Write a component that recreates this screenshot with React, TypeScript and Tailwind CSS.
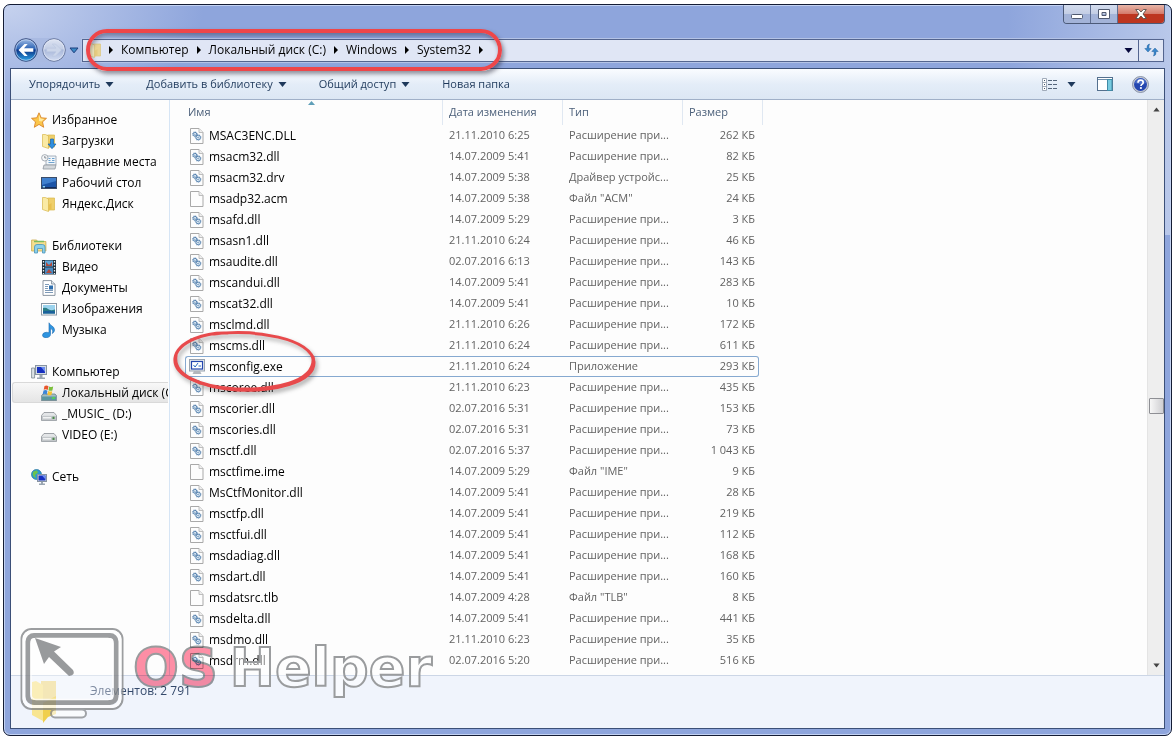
import type { ReactNode } from 'react';

type FileKind = 'dll' | 'blank' | 'exe';

interface FileRow {
  name: string;
  date: string;
  type: string;
  size: string;
  kind: FileKind;
}

const EXT = 'Расширение при...';

function row(name: string, date: string, size: string, type = EXT, kind: FileKind = 'dll'): FileRow {
  return { name, date, size, type, kind };
}

const files: FileRow[] = [
  row('MSAC3ENC.DLL', '21.11.2010 6:25', '262 КБ'),
  row('msacm32.dll', '14.07.2009 5:41', '82 КБ'),
  row('msacm32.drv', '14.07.2009 5:38', '25 КБ', 'Драйвер устройс...'),
  row('msadp32.acm', '14.07.2009 5:38', '24 КБ', 'Файл "ACM"', 'blank'),
  row('msafd.dll', '14.07.2009 5:29', '3 КБ'),
  row('msasn1.dll', '21.11.2010 6:24', '46 КБ'),
  row('msaudite.dll', '02.07.2016 6:13', '143 КБ'),
  row('mscandui.dll', '14.07.2009 5:41', '283 КБ'),
  row('mscat32.dll', '14.07.2009 5:41', '10 КБ'),
  row('msclmd.dll', '21.11.2010 6:26', '172 КБ'),
  row('mscms.dll', '21.11.2010 6:24', '611 КБ'),
  row('msconfig.exe', '21.11.2010 6:24', '293 КБ', 'Приложение', 'exe'),
  row('mscoree.dll', '21.11.2010 6:23', '435 КБ'),
  row('mscorier.dll', '02.07.2016 5:31', '153 КБ'),
  row('mscories.dll', '02.07.2016 5:31', '73 КБ'),
  row('msctf.dll', '02.07.2016 5:37', '1 043 КБ'),
  row('msctfime.ime', '14.07.2009 5:29', '9 КБ', 'Файл "IME"', 'blank'),
  row('MsCtfMonitor.dll', '14.07.2009 5:41', '28 КБ'),
  row('msctfp.dll', '14.07.2009 5:41', '219 КБ'),
  row('msctfui.dll', '14.07.2009 5:41', '112 КБ'),
  row('msdadiag.dll', '14.07.2009 5:41', '168 КБ'),
  row('msdart.dll', '14.07.2009 5:41', '160 КБ'),
  row('msdatsrc.tlb', '14.07.2009 4:28', '8 КБ', 'Файл "TLB"', 'blank'),
  row('msdelta.dll', '14.07.2009 5:41', '441 КБ'),
  row('msdmo.dll', '21.11.2010 6:23', '35 КБ'),
  row('msdrm.dll', '02.07.2016 5:20', '516 КБ'),
];

function Svg({ children }: { children: ReactNode }) {
  return (
    <svg width="16" height="16" viewBox="0 0 16 16" className="shrink-0" aria-hidden="true">
      {children}
    </svg>
  );
}

function StarIcon() {
  return (
    <Svg>
      <path d="M8 .8l2.200 5 5.300.500-4 3.600 1.200 5.400L8 12.400l-4.700 2.900 1.200-5.400-4-3.600 5.300-.500z" fill="#fbc64a" stroke="#d9862a" strokeWidth=".9" />
      <path d="M8 2.800l1.500 3.800 3.800.400-2.900 2.500L8 9z" fill="#ffe9a0" />
    </Svg>
  );
}

function FolderShape() {
  return (
    <>
      <path d="M6.500 2h7v12h-7z" fill="#efcf6b" stroke="#d9b84c" strokeWidth=".7" />
      <path d="M1.500 1.500h3l3 1.500v12.500l-6-2z" fill="#faeaa4" stroke="#d9b84c" strokeWidth=".7" />
      <path d="M7.500 9l3-2v6l-3 2z" fill="#e8c050" />
    </>
  );
}

function FolderIcon() {
  return (
    <Svg>
      <FolderShape />
    </Svg>
  );
}

function DownloadsIcon() {
  return (
    <Svg>
      <FolderShape />
      <path d="M9.500 6h3v5H15l-4 4.700L7 11h2.500z" fill="#2f8fe0" stroke="#1763ac" strokeWidth=".7" />
    </Svg>
  );
}

function RecentIcon() {
  return (
    <Svg>
      <path d="M5 2h10v9H5z" fill="#f1f6fa" stroke="#93a0ad" strokeWidth=".8" />
      <path d="M7.500 4.500h2M11 4.500h2.500M7.500 6.500h2M11 6.500h2.500M7.500 8.500h6" stroke="#6fa3cf" />
      <path d="M3 11h12l-1 4H2z" fill="#d3d7db" stroke="#8f979f" strokeWidth=".8" />
      <circle cx="3.800" cy="3.800" r="3.200" fill="#f5f7f9" stroke="#949da6" strokeWidth=".8" />
      <path d="M3.800 2v2h1.600" fill="none" stroke="#56606b" strokeWidth=".7" />
    </Svg>
  );
}

function DesktopIcon() {
  return (
    <Svg>
      <rect x=".500" y="2.500" width="15" height="11" fill="#1c55a8" stroke="#3a4c68" />
      <path d="M1 3h14v3L1 10z" fill="#3f80cf" />
      <path d="M1 12.500h14" stroke="#132c5c" />
      <path d="M1.500 12.500h2.500v-1.500h-2z" fill="#8fd4f0" />
    </Svg>
  );
}

function LibrariesIcon() {
  return (
    <Svg>
      <path d="M.600 2h5l1 1.500h8.300V13H.600z" fill="#f6df8e" stroke="#c9a94b" strokeWidth=".8" />
      <path d="M3 3.500h10" stroke="#7cbb5e" strokeWidth="1.500" />
      <path d="M3.500 15V9q0-2.500 2.500-2.500h5.500Q14 6.500 14 9v6h-2.500v-4.500h-5V15z" fill="#8cd0ea" stroke="#4a94bb" strokeWidth=".8" />
    </Svg>
  );
}

function VideoIcon() {
  return (
    <Svg>
      <rect x="1" y="1" width="14" height="14.500" fill="#22303c" />
      <rect x="4" y="1.500" width="8" height="6" fill="#5fa6d8" />
      <rect x="4" y="8.500" width="8" height="6.500" fill="#4a8ac0" />
      <path d="M5 3l3 3 3-3v4H5zM5 14l3-4 3 4z" fill="#b04a3c" />
      <path d="M2.500 2v13M13.500 2v13" stroke="#e8eef2" strokeWidth="1.300" strokeDasharray="1.500 1.500" />
    </Svg>
  );
}

function DocumentsIcon() {
  return (
    <Svg>
      <path d="M2 .600h8.500L14 4v11.400H2z" fill="#fff" stroke="#7f8b98" strokeWidth=".9" />
      <path d="M10.500.600V4H14" fill="#dfe6ec" stroke="#7f8b98" strokeWidth=".8" />
      <path d="M4 4.500h4M4 6.500h3M4 8.500h3M4 10.500h8M4 12.500h8" stroke="#6f8fb0" strokeWidth=".9" />
      <rect x="8" y="5.500" width="4" height="4" fill="#2f6fae" />
    </Svg>
  );
}

function PicturesIcon() {
  return (
    <Svg>
      <rect x=".500" y="2.500" width="15" height="11.500" fill="#fff" stroke="#8b98a5" />
      <rect x="2" y="4" width="12" height="8.500" fill="#9bd3ee" />
      <path d="M2 7q3-1 5 1t7 .500v4H2z" fill="#2b7e86" />
      <path d="M2 10.500q6-1.500 12 0v2H2z" fill="#1a5f9c" />
    </Svg>
  );
}

function MusicIcon() {
  return (
    <Svg>
      <path d="M8 .800c.500 2.800 5.500 3.200 5.500 7 0 1.800-1 3-2.200 3.700 1-2.700.200-4.300-1.800-5.200v6q0 3-4.300 3.400-3.700 0-3.700-2.400 0-2.700 3.800-3 1.500 0 2.700.500z" fill="#2e95e0" stroke="#1a68b0" strokeWidth=".6" />
    </Svg>
  );
}

function ComputerIcon() {
  return (
    <Svg>
      <path d="M.600 4h3v10h-3z" fill="#dde3e6" stroke="#7a868f" strokeWidth=".8" />
      <rect x="4.500" y="1.500" width="11" height="9" fill="#d3dbe4" stroke="#8794a2" />
      <rect x="6" y="3" width="8" height="6" fill="#1730c0" />
      <path d="M10 3h4v5z" fill="#6c8df0" />
      <path d="M8.500 11h3v2.500H14V15H6v-1.500h2.500z" fill="#9aa6b2" />
    </Svg>
  );
}

function DriveIcon() {
  return (
    <Svg>
      <path d="M3 6.500h10l2.500 3v5H.500v-5z" fill="#e4e6e8" stroke="#8a8f94" strokeWidth=".8" />
      <path d="M1 9.800h14v4.400H1z" fill="#c3c7ca" />
      <rect x="2" y="11" width="8" height="1.500" fill="#f2f3f4" />
      <rect x="11.500" y="10.700" width="2" height="2.300" fill="#4d8a4c" />
    </Svg>
  );
}

function SystemDriveIcon() {
  return (
    <Svg>
      <path d="M2 9h12l1.700 2v4.500H.300V11z" fill="#a4bdc2" stroke="#66808a" strokeWidth=".8" />
      <path d="M1 11.500h14V15H1z" fill="#5b97a0" />
      <rect x="11" y="12" width="3" height="2" fill="#54cd5c" />
      <path d="M3.500 1Q5.500 0 7.500 1.200L6.700 5Q4.700 3.800 2.700 4.800z" fill="#e8562c" />
      <path d="M8.200 1.400q2 1 4 .200l-.800 3.800q-2 .800-4-.200z" fill="#7cbf3c" />
      <path d="M2.500 5.500q2-1 4 .200l-.800 3.800q-2-1.200-4-.200z" fill="#3a86d8" />
      <path d="M7.200 6q2 1 4 .200l-.800 3.800q-2 .800-4-.200z" fill="#f8c12c" />
    </Svg>
  );
}

function NetworkIcon() {
  return (
    <Svg>
      <circle cx="5.500" cy="5.500" r="5" fill="#2a9ad0" stroke="#26749c" strokeWidth=".7" />
      <path d="M2 3q2-2 4-1.500l1 2-3 2.500 1 3-2-1Q1 6 2 3z" fill="#6cc34c" />
      <rect x="6.500" y="5.500" width="9" height="7" fill="#d3dbe4" stroke="#8794a2" />
      <rect x="7.500" y="6.500" width="7" height="5" fill="#1730c0" />
      <path d="M11 6.500h3.500v4z" fill="#6c8df0" />
      <path d="M10 13h2v1.500h2V16H8v-1.500h2z" fill="#9aa6b2" />
    </Svg>
  );
}

function FileIcon({ kind }: { kind: FileKind }) {
  if (kind === 'exe') {
    return (
      <Svg>
        <rect x=".500" y=".500" width="15" height="11.500" fill="#e4e8ee" stroke="#9aa4b0" />
        <rect x="2.500" y="2.500" width="11" height="7.500" fill="#fff" stroke="#2446ae" strokeWidth="1.200" />
        <path d="M4.500 6l1.600 2L9 4" fill="none" stroke="#2a6ac0" />
        <path d="M9.500 7h2.500" stroke="#2a6ac0" />
        <path d="M5 12h6l1.500 3h-9z" fill="#b2b6bc" />
      </Svg>
    );
  }
  return (
    <Svg>
      <path d="M1.500.500H10L14 4.500v11H1.500z" fill="#fdfdfd" stroke="#a9a9a9" />
      <path d="M10 .500v4h4" fill="#eee" stroke="#b0b0b0" strokeWidth=".8" />
      {kind === 'dll' ? (
        <g fill="#e3eef7" stroke="#4a78a8" strokeWidth=".9">
          <circle cx="5.900" cy="6.200" r="1.900" />
          <circle cx="9.200" cy="9.500" r="2.300" />
          <circle cx="5.900" cy="6.200" r="2.500" fill="none" strokeWidth=".600" strokeDasharray=".800 1.200" />
          <circle cx="9.200" cy="9.500" r="2.900" fill="none" strokeWidth=".600" strokeDasharray=".800 1.200" />
          <circle cx="5.900" cy="6.200" r=".400" strokeWidth=".500" />
          <circle cx="9.200" cy="9.500" r=".600" strokeWidth=".600" />
        </g>
      ) : null}
    </Svg>
  );
}

interface NavItem {
  label: string;
  icon: ReactNode;
  selected?: boolean;
}

const groups: { title: NavItem; items: NavItem[] }[] = [
  {
    title: { label: 'Избранное', icon: <StarIcon /> },
    items: [
      { label: 'Загрузки', icon: <DownloadsIcon /> },
      { label: 'Недавние места', icon: <RecentIcon /> },
      { label: 'Рабочий стол', icon: <DesktopIcon /> },
      { label: 'Яндекс.Диск', icon: <FolderIcon /> },
    ],
  },
  {
    title: { label: 'Библиотеки', icon: <LibrariesIcon /> },
    items: [
      { label: 'Видео', icon: <VideoIcon /> },
      { label: 'Документы', icon: <DocumentsIcon /> },
      { label: 'Изображения', icon: <PicturesIcon /> },
      { label: 'Музыка', icon: <MusicIcon /> },
    ],
  },
  {
    title: { label: 'Компьютер', icon: <ComputerIcon /> },
    items: [
      { label: 'Локальный диск (C:)', icon: <SystemDriveIcon />, selected: true },
      { label: '_MUSIC_ (D:)', icon: <DriveIcon /> },
      { label: 'VIDEO (E:)', icon: <DriveIcon /> },
    ],
  },
  { title: { label: 'Сеть', icon: <NetworkIcon /> }, items: [] },
];

function ArrowDown({ className = '' }: { className?: string }) {
  return (
    <svg width="9" height="5" viewBox="0 0 9 5" className={`shrink-0 ${className}`} aria-hidden="true">
      <path d="M.500 0h8l-4 5z" fill="currentColor" />
    </svg>
  );
}

function ArrowRight() {
  return (
    <svg width="4" height="8" viewBox="0 0 4 8" className="shrink-0" aria-hidden="true">
      <path d="M0 0l4 4-4 4z" fill="#000" />
    </svg>
  );
}

function CaptionButtons() {
  return (
    <div className="flex h-[19px] overflow-hidden rounded-b-[4px] border border-t-0 border-[#4c5a78]">
      <button type="button" aria-label="Свернуть" className="flex w-[27px] items-center justify-center border-r border-[#5f6f92] bg-linear-to-b from-[#d3dcee] via-[#c3cde4] via-50% to-[#a3b3d8] to-50%">
        <svg width="12" height="5" viewBox="0 0 12 5" className="mt-1">
          <rect x=".500" y=".500" width="11" height="4" rx="1" fill="#fff" stroke="#505a70" />
        </svg>
      </button>
      <button type="button" aria-label="Развернуть" className="flex w-[27px] items-center justify-center border-r border-[#5f6f92] bg-linear-to-b from-[#d3dcee] via-[#c3cde4] via-50% to-[#a3b3d8] to-50%">
        <svg width="12" height="10" viewBox="0 0 12 10">
          <path d="M.500.500h11v9H.500zM4 3.500h4v3H4z" fill="#fff" fillRule="evenodd" stroke="#505a70" />
        </svg>
      </button>
      <button type="button" aria-label="Закрыть" className="flex w-[46px] items-center justify-center bg-linear-to-b from-[#e6b5a8] via-[#d4796a] via-50% to-[#bd3520] to-50%">
        <svg width="12" height="10" viewBox="0 0 12 10">
          <path d="M.700.500h3L6 3 8.300.500h3L8 5l3.300 4.500h-3L6 7 3.700 9.500h-3L4 5z" fill="#fff" stroke="#55504f" strokeWidth=".9" />
        </svg>
      </button>
    </div>
  );
}

function HistoryButtons() {
  return (
    <div className="flex w-[68px] items-center">
      <div className="flex gap-1 rounded-full bg-[#a9bae2]">
        <button type="button" aria-label="Назад">
          <svg width="24" height="24" viewBox="0 0 24 24" className="block">
            <defs>
              <linearGradient id="back" x1="0" y1="0" x2="0" y2="1">
                <stop offset="0" stopColor="#a5bfe6" />
                <stop offset=".45" stopColor="#2a62b4" />
                <stop offset=".5" stopColor="#0c3486" />
                <stop offset="1" stopColor="#2fa8ea" />
              </linearGradient>
            </defs>
            <circle cx="12" cy="12" r="11.300" fill="url(#back)" stroke="#3c4f80" />
            <circle cx="12" cy="12" r="10.300" fill="none" stroke="#c3d6f2" strokeWidth=".7" />
            <path d="M4.500 12l6-6h3.200L10 10.200h9.300v3.600H10l3.700 4.200h-3.200z" fill="#fff" />
          </svg>
        </button>
        <button type="button" aria-label="Вперёд">
          <svg width="24" height="24" viewBox="0 0 24 24" className="block">
            <defs>
              <linearGradient id="fwd" x1="0" y1="0" x2="0" y2="1">
                <stop offset="0" stopColor="#dfe5f3" />
                <stop offset=".45" stopColor="#c3cee6" />
                <stop offset=".5" stopColor="#a9b8da" />
                <stop offset="1" stopColor="#d3ddf2" />
              </linearGradient>
            </defs>
            <circle cx="12" cy="12" r="11.300" fill="url(#fwd)" stroke="#66759c" />
            <circle cx="12" cy="12" r="10.300" fill="none" stroke="#e4eaf6" strokeWidth=".7" />
            <path d="M19.500 12l-6-6h-3.200l3.700 4.200H4.700v3.600H14l-3.700 4.200h3.200z" fill="#ccd6ea" stroke="#b8c4de" strokeWidth=".5" />
          </svg>
        </button>
      </div>
      <button type="button" aria-label="Последние страницы" className="ml-[3px]">
        <svg width="10" height="7" viewBox="0 0 10 7" className="block">
          <path d="M1 1h8L5 5.800z" fill="#3b8ac6" stroke="#1d3e7c" />
        </svg>
      </button>
    </div>
  );
}

function AddressBar() {
  const crumbs = ['Компьютер', 'Локальный диск (C:)', 'Windows', 'System32'];
  return (
    <div className="flex h-[23px] grow border border-[#54658f] bg-[#e0e6f5] text-[12px] text-black shadow-[0_0_0_1px_#b4c3e6]">
      <nav aria-label="Адрес" className="relative flex grow items-center gap-2 pl-[26px]">
        <span className="absolute top-[2px] left-[4px] opacity-70">
          <FolderIcon />
        </span>
        <ArrowRight />
        {crumbs.map((crumb) => (
          <span key={crumb} className="flex items-center gap-2 whitespace-nowrap">
            <a href="#">{crumb}</a>
            <ArrowRight />
          </span>
        ))}
        {/* red marker around the path */}
        <div className="pointer-events-none absolute top-[-11px] left-[3px] h-[42px] w-[416px] rounded-full border-4 border-[#ee4649] shadow-[2px_3px_4px_rgba(40,40,60,0.5),inset_1px_3px_4px_rgba(40,40,60,0.4)]" />
      </nav>
      <button type="button" aria-label="Предыдущие расположения" className="px-[5px]">
        <ArrowDown className="text-[#06083c]" />
      </button>
      <button type="button" aria-label="Обновить" className="flex w-[25px] items-center justify-center border-l border-[#54658f]">
        <svg width="15" height="14" viewBox="0 0 15 14">
          <path d="M5.500 1Q2.500 1.500 3 5.500H.800L4 9l3.200-3.500H5Q4.500 3 5.500 1z" fill="#3a87cc" stroke="#24639f" strokeWidth=".5" />
          <path d="M9.500 13q3-.500 2.500-4.500h2.200L11 5 7.800 8.500H10q.500 2.500-.500 4.500z" fill="#3a87cc" stroke="#24639f" strokeWidth=".5" />
        </svg>
      </button>
    </div>
  );
}

function Toolbar() {
  const actions = [
    { label: 'Упорядочить', menu: true },
    { label: 'Добавить в библиотеку', menu: true },
    { label: 'Общий доступ', menu: true },
    { label: 'Новая папка', menu: false },
  ];
  return (
    <div className="flex h-[31px] items-center border-b border-[#a0b0c8] bg-linear-to-b from-[#fafcff] via-[#e4edf8] via-50% to-[#dce7f4] pr-[15px] pl-[18px] text-[11px] text-[#1e395b]">
      <div className="flex grow gap-8">
        {actions.map((action) => (
          <button key={action.label} type="button" className="flex items-center gap-[5px] whitespace-nowrap">
            {action.label}
            {action.menu ? <ArrowDown /> : null}
          </button>
        ))}
      </div>
      <button type="button" aria-label="Изменить представление">
        <svg width="15" height="13" viewBox="0 0 15 13" className="block">
          <path d="M.500.500h4v12h-4zM.500 4.500h4M.500 8.500h4" fill="#fff" stroke="#8b98a8" strokeWidth=".8" />
          <path d="M2 2.500h1M2 6.500h1M2 10.500h1" stroke="#41556e" />
          <path d="M6 2.500h4M11 2.500h4M6 6.500h4M11 6.500h4M6 10.500h4M11 10.500h4" stroke="#54657a" />
        </svg>
      </button>
      <button type="button" aria-label="Другие параметры" className="ml-[10px]">
        <ArrowDown />
      </button>
      <button type="button" aria-label="Область просмотра" className="ml-[21px]">
        <svg width="16" height="14" viewBox="0 0 16 14" className="block">
          <rect x=".500" y=".500" width="15" height="13" fill="#fff" stroke="#54708e" />
          <path d="M1 2.500h14" stroke="#6e8caa" />
          <rect x="10.500" y="2.500" width="4.500" height="11" fill="#78cbe0" stroke="#418ba6" />
        </svg>
      </button>
      <button type="button" aria-label="Справка" className="ml-[19px]">
        <svg width="17" height="17" viewBox="0 0 17 17" className="block">
          <circle cx="8.500" cy="8.500" r="8" fill="#c7ccd6" stroke="#76829a" strokeWidth=".8" />
          <circle cx="8.500" cy="8.500" r="6.500" fill="#2547b0" />
          <path d="M3 7a5.600 5.600 0 0111 0q-5 2-11 0z" fill="#6485d8" opacity=".6" />
          <path d="M6 6.800q0-2.600 2.600-2.600t2.600 2.200q0 1.200-1.300 2-.9.600-.9 1.500" fill="none" stroke="#fff" strokeWidth="1.700" />
          <circle cx="8.900" cy="12" r="1.100" fill="#fff" />
        </svg>
      </button>
    </div>
  );
}

function Sidebar() {
  return (
    <aside className="w-[159px] shrink-0 overflow-hidden border-r border-[#d6e5f5] pt-[9px] text-[12px] text-black">
      <nav aria-label="Область переходов" className="flex flex-col gap-[21px]">
        {groups.map(({ title, items }) => (
          <div key={title.label}>
            <a href="#" className="flex h-[21px] items-center gap-[5px] pl-5 whitespace-nowrap">
              {title.icon}
              {title.label}
            </a>
            {items.map((item) => (
              <a
                key={item.label}
                href="#"
                className={
                  item.selected
                    ? 'mx-px flex h-[21px] items-center gap-[5px] overflow-hidden rounded-l-[3px] border border-r-0 border-[#d9d9d9] bg-linear-to-b from-[#f8f8f8] to-[#e5e5e5] pl-[28px] whitespace-nowrap'
                    : 'flex h-[21px] items-center gap-[5px] pl-[30px] whitespace-nowrap'
                }
              >
                {item.icon}
                {item.label}
              </a>
            ))}
          </div>
        ))}
      </nav>
    </aside>
  );
}

const headCell = 'h-[25px] border-r border-[#e0e8f2] p-0 pl-[6px] text-left font-normal';

function FileTable() {
  return (
    <table className="w-[578px] table-fixed border-separate border-spacing-0 text-[11px] text-[#626262]">
      <colgroup>
        <col className="w-[258px]" />
        <col className="w-[120px]" />
        <col className="w-[120px]" />
        <col className="w-[76px]" />
        <col className="w-[4px]" />
      </colgroup>
      <thead className="text-[#4c607a]">
        <tr>
          <th className="relative h-[25px] border-r border-[#e0e8f2] p-0 pl-[3px] text-left font-normal">
            Имя
            <svg width="7" height="4" viewBox="0 0 7 4" className="absolute top-px left-[123px]" aria-hidden="true">
              <path d="M0 4l3.500-4L7 4z" fill="#5f9fb8" />
            </svg>
          </th>
          <th className={headCell}>Дата изменения</th>
          <th className={headCell}>Тип</th>
          <th colSpan={2} className={headCell}>
            Размер
          </th>
        </tr>
      </thead>
      <tbody>
        {files.map((file) => {
          const edge = file.kind === 'exe' ? 'border-[#86a9d0]' : 'border-transparent';
          return (
            <tr key={file.name}>
              <td className={`h-[21px] rounded-l-[3px] border border-r-0 p-0 pl-[3px] text-[12px] text-black ${edge}`}>
                <span className="flex h-[19px] items-center gap-[4px]">
                  <FileIcon kind={file.kind} />
                  {file.name}
                </span>
              </td>
              <td className={`border-y p-0 pl-[6px] ${edge}`}>{file.date}</td>
              <td className={`border-y p-0 pl-[6px] whitespace-nowrap ${edge}`}>{file.type}</td>
              <td className={`rounded-r-[3px] border border-l-0 p-0 pr-[3px] text-right ${edge}`}>{file.size}</td>
              <td className="p-0" />
            </tr>
          );
        })}
      </tbody>
    </table>
  );
}

function Scrollbar() {
  return (
    <div className="flex w-[17px] shrink-0 flex-col items-center border-l border-[#e4e4e4] bg-[#eeeeee] py-[7px]">
      <ArrowDown className="w-[7px] rotate-180 text-[#444]" />
      <div className="flex grow flex-col items-center">
        <div className="grow-[287]" />
        <div className="h-[16px] w-[15px] rounded-[1px] border border-[#8e8f94] bg-linear-to-r from-[#f7f7f7] to-[#cfcfd2]" />
        <div className="grow-[249]" />
      </div>
      <ArrowDown className="w-[7px] text-[#444]" />
    </div>
  );
}

/* hand-drawn loop around msconfig.exe */
function MarkerLoop() {
  return (
    <svg
      width="152"
      height="74"
      viewBox="0 0 152 74"
      className="pointer-events-none absolute top-[227px] left-0 drop-shadow-[2px_3px_2px_rgba(50,50,50,0.4)]"
      aria-hidden="true"
    >
      <g fill="none" stroke="#e84a4c" strokeLinecap="round">
        <path d="M44 7C85 2 141 11 144 35C145 56 102 65 66 63C30 60 3 48 5 31C8 14 36 5 58 6" strokeWidth="3" />
        <path d="M143 30C146 56 102 63 66 62C30 60 3 48 6 29" strokeWidth="3" />
      </g>
    </svg>
  );
}

function Watermark() {
  return (
    <div className="pointer-events-none absolute bottom-[14px] left-[15px] flex items-start gap-2">
      <svg width="106" height="94" viewBox="0 0 106 94" className="opacity-80" aria-hidden="true">
        <rect x="2.500" y="2" width="101" height="80" rx="10" fill="none" stroke="#858789" strokeWidth="2" />
        <rect x="5" y="4.500" width="96" height="75" rx="8" fill="none" stroke="#fff" strokeWidth="3" />
        <rect x="9" y="8.500" width="88" height="67" rx="6" fill="#fff" fillOpacity=".45" stroke="#858789" strokeWidth="5" />
        <rect x="12" y="11.500" width="82" height="61" rx="5" fill="none" stroke="#fff" strokeWidth="1.500" />
        <path d="M16 11l26 9-7 4.500L54 43q3 5-4 6L30 30l-5 7z" fill="#808284" />
        <path d="M36 82.500h27a4 4 0 010 8H36a4 4 0 010-8z" fill="#fff" fillOpacity=".8" stroke="#8d8f93" strokeWidth="2" />
      </svg>
      <div className="mt-[9px] flex gap-3 font-['DejaVu_Sans',sans-serif] text-[54px] leading-[64px] font-bold whitespace-nowrap">
        <span className="text-[#ff8fa6] mix-blend-multiply [-webkit-text-stroke:2px_#9a9c9e]">OS</span>
        <span className="text-white/50 [-webkit-text-stroke:2px_#9a9c9e]">Helper</span>
      </div>
    </div>
  );
}

function StatusBar() {
  return (
    <footer className="flex h-[53px] items-start border-t border-[#ccd6e6] bg-[#f0f4fc] pl-[18px] text-[12px] text-[#34496b]">
      <svg width="34" height="46" viewBox="0 0 34 46" className="mt-[3px]" aria-hidden="true">
        <path d="M12 2h15v32H12z" fill="#eed98e" />
        <path d="M3 3l4-1 7 4v36l-11-6z" fill="#f8e591" />
        <path d="M14 24l13-7v18l-8 3-5 6z" fill="#f0cf4c" />
      </svg>
      <span className="mt-[5px] ml-[27px] leading-[20px]">Элементов: 2 791</span>
    </footer>
  );
}

export default function App() {
  return (
    <div className="bg-white pt-1 pr-[2px] pb-px pl-[3px] font-['Open_Sans',sans-serif]">
      <div className="relative rounded-[7px] border border-[#141c34] bg-[#8ea5dc] bg-[radial-gradient(ellipse_200px_120px_at_0_0,#c6d2ee,transparent),linear-gradient(to_right,transparent_86%,#b9c8ea)] bg-[length:100%_230px] bg-no-repeat px-[6px] pb-[6px] shadow-[inset_0_0_0_1px_#c3d2f2]">
        <header>
          <div className="flex h-[29px] items-start justify-end">
            <CaptionButtons />
          </div>
          <div className="mb-[2px] flex h-8 items-center pr-px pl-1">
            <HistoryButtons />
            <AddressBar />
          </div>
        </header>
        <div className="border border-[#3c5078] bg-white">
          <Toolbar />
          <div className="flex bg-[#fdfdfd]">
            <Sidebar />
            <main className="relative grow pb-1 pl-[15px]">
              <FileTable />
              <MarkerLoop />
            </main>
            <Scrollbar />
          </div>
          <StatusBar />
        </div>
        <Watermark />
      </div>
    </div>
  );
}
